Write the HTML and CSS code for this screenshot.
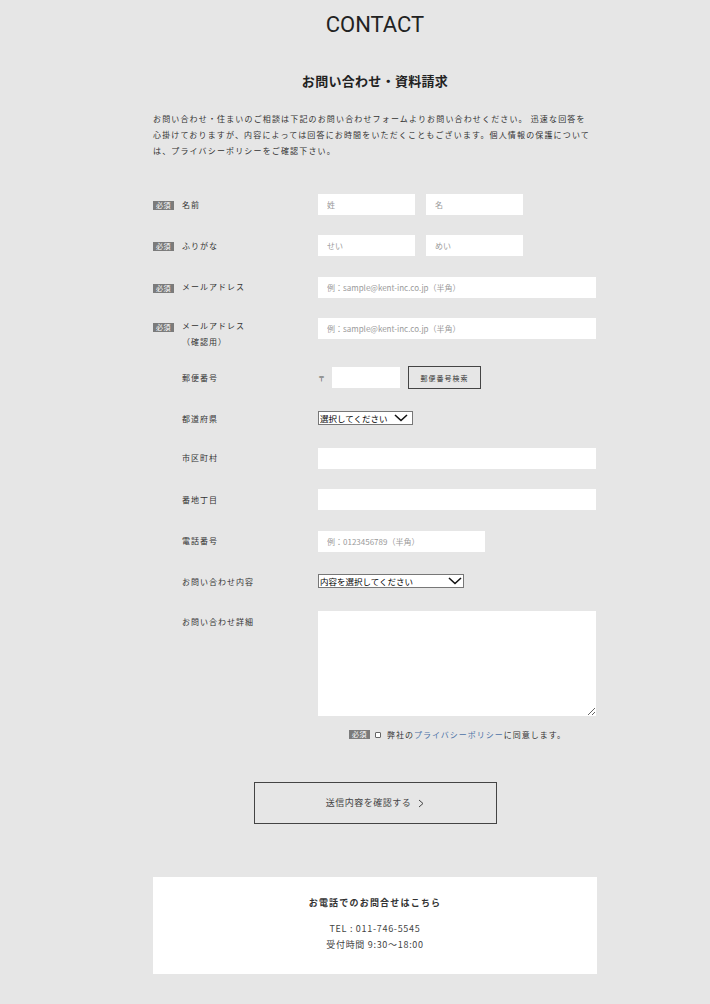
FILE: index.html
```html
<!DOCTYPE html>
<html lang="ja">
<head>
    <meta charset="UTF-8">
    <meta name="viewport" content="width=device-width, initial-scale=1.0">
    <title>CONTACT</title>
    <link rel="stylesheet" href="styles.css">
</head>
<body>
    <div class="wrap">
        <h1 class="page-title">CONTACT</h1>
        <h2 class="section-title">お問い合わせ・資料請求</h2>
        <p class="lead">お問い合わせ・住まいのご相談は下記のお問い合わせフォームよりお問い合わせください。 迅速な回答を<br>心掛けておりますが、内容によっては回答にお時間をいただくこともございます。個人情報の保護について<br>は、プライバシーポリシーをご確認下さい。</p>

        <form class="contact-form" onsubmit="return false;">
            <div class="row">
                <div class="label"><span class="req">必須</span><span>名前</span></div>
                <div class="field">
                    <input class="input half" type="text" placeholder="姓">
                    <input class="input half" type="text" placeholder="名">
                </div>
            </div>

            <div class="row">
                <div class="label"><span class="req">必須</span><span>ふりがな</span></div>
                <div class="field">
                    <input class="input half" type="text" placeholder="せい">
                    <input class="input half" type="text" placeholder="めい">
                </div>
            </div>

            <div class="row">
                <div class="label"><span class="req">必須</span><span>メールアドレス</span></div>
                <div class="field">
                    <input class="input full" type="email" placeholder="例：sample@kent-inc.co.jp（半角）">
                </div>
            </div>

            <div class="row row-2line">
                <div class="label"><span class="req">必須</span><span>メールアドレス<br>（確認用）</span></div>
                <div class="field">
                    <input class="input full" type="email" placeholder="例：sample@kent-inc.co.jp（半角）">
                </div>
            </div>

            <div class="row">
                <div class="label plain">郵便番号</div>
                <div class="field">
                    <span class="zip-mark">〒</span>
                    <input class="input zip" type="text">
                    <button class="zip-btn" type="button">郵便番号検索</button>
                </div>
            </div>

            <div class="row row-select">
                <div class="label plain">都道府県</div>
                <div class="field">
                    <span class="select-wrap">
                        <select class="select pref">
                            <option>選択してください</option>
                        </select>
                        <svg class="chevron" width="14" height="8" viewBox="0 0 14 8"><path d="M1 1 L7 6.5 L13 1" fill="none" stroke="#111" stroke-width="1.6"/></svg>
                    </span>
                </div>
            </div>

            <div class="row">
                <div class="label plain">市区町村</div>
                <div class="field"><input class="input full" type="text"></div>
            </div>

            <div class="row">
                <div class="label plain">番地丁目</div>
                <div class="field"><input class="input full" type="text"></div>
            </div>

            <div class="row">
                <div class="label plain">電話番号</div>
                <div class="field"><input class="input tel" type="tel" placeholder="例：0123456789（半角）"></div>
            </div>

            <div class="row row-select">
                <div class="label plain">お問い合わせ内容</div>
                <div class="field">
                    <span class="select-wrap">
                        <select class="select kind">
                            <option>内容を選択してください</option>
                        </select>
                        <svg class="chevron chevron-tight" width="14" height="8" viewBox="0 0 14 8"><path d="M1 1 L7 6.5 L13 1" fill="none" stroke="#111" stroke-width="1.6"/></svg>
                    </span>
                </div>
            </div>

            <div class="row row-last">
                <div class="label plain">お問い合わせ詳細</div>
                <div class="field"><textarea class="textarea"></textarea></div>
            </div>

            <div class="agree">
                <span class="req">必須</span>
                <input class="check" type="checkbox" id="agree">
                <label for="agree">弊社の<a href="#">プライバシーポリシー</a>に同意します。</label>
            </div>

            <div class="submit-area">
                <button class="submit-btn" type="submit">送信内容を確認する<svg class="arrow" width="6" height="9" viewBox="0 0 6 9"><path d="M1 1 L5 4.5 L1 8" fill="none" stroke="#444" stroke-width="1"/></svg></button>
            </div>
        </form>

        <div class="tel-box">
            <h3 class="tel-title">お電話でのお問合せはこちら</h3>
            <p class="tel-line">TEL : 011-746-5545</p>
            <p class="tel-line">受付時間 9:30〜18:00</p>
        </div>
    </div>
</body>
</html>
```

FILE: styles.css
```css
body {
    margin: 0;
    background-color: #e6e6e6;
    color: #333;
    font-family: "Noto Sans CJK JP", "Noto Sans", sans-serif;
}

.wrap {
    width: 444px;
    margin-left: 153px;
    padding-bottom: 29px;
}

.page-title {
    margin: 12px 0 0;
    font-family: Roboto, "Noto Sans", sans-serif;
    font-weight: 400;
    font-size: 22px;
    line-height: 26px;
    text-align: center;
    color: #222;
}

.section-title {
    margin: 33px 0 0;
    font-size: 13px;
    line-height: 20px;
    font-weight: bold;
    letter-spacing: 0.3px;
    text-align: center;
    color: #222;
}

.lead {
    margin: 20px 0 0;
    font-size: 8px;
    line-height: 16px;
    letter-spacing: 1.15px;
}

/* form */
.contact-form {
    margin-top: 35px;
}

.row {
    display: flex;
    align-items: flex-start;
    margin-bottom: 20.33px;
}

.row-2line {
    margin-bottom: 16.8px;
}

.row-last {
    margin-bottom: 0;
}

.label {
    width: 165px;
    flex-shrink: 0;
    display: flex;
    align-items: flex-start;
    padding-top: 2.5px;
    font-size: 8px;
    line-height: 16px;
    letter-spacing: 1px;
}

.row-2line .label {
    padding-top: 0.5px;
}

.label.plain {
    padding-left: 29px;
    box-sizing: border-box;
}

.req {
    display: inline-block;
    width: 21px;
    height: 9px;
    margin: 4.5px 8px 0 0;
    background: #7b7b7b;
    color: #fff;
    font-size: 7px;
    line-height: 9px;
    letter-spacing: 0.5px;
    text-align: center;
    flex-shrink: 0;
}

.field {
    flex: 1;
    display: flex;
    align-items: center;
    gap: 11px;
    min-height: 21px;
}

.row-select .field {
    min-height: 19px;
}

.input {
    height: 21px;
    box-sizing: border-box;
    border: none;
    background: #fff;
    padding: 0 9px;
    font-family: "Noto Sans CJK JP", "Noto Sans", sans-serif;
    font-size: 8px;
    color: #333;
    outline: none;
}

.input::placeholder {
    color: #9a9a9a;
}

.input.half { width: 97px; }
.input.full { width: 278px; }
.input.tel { width: 167px; }
.input.zip { width: 68px; margin-left: -4px; }

.zip-mark {
    font-size: 7px;
    color: #555;
}

.zip-btn {
    width: 73px;
    height: 23px;
    margin: -1px 0 -1px -3px;
    border: 1px solid #444;
    background: transparent;
    font-family: "Noto Sans CJK JP", "Noto Sans", sans-serif;
    font-size: 7px;
    letter-spacing: 1px;
    color: #333;
    padding: 0;
    cursor: pointer;
}

.select-wrap {
    position: relative;
    display: inline-block;
    height: 14px;
}

.select {
    appearance: none;
    -webkit-appearance: none;
    height: 14px;
    box-sizing: border-box;
    border: 1px solid #777;
    border-radius: 0;
    background: #fff;
    padding: 0 0 0 1px;
    font-family: "Noto Sans CJK JP", "Noto Sans", sans-serif;
    font-size: 8.5px;
    line-height: 12px;
    color: #000;
    outline: none;
    display: block;
}

.select.pref { width: 95px; }
.select.kind { width: 146px; }

.chevron {
    position: absolute;
    right: 5px;
    top: 3px;
    pointer-events: none;
}

.chevron-tight {
    right: 2px;
}

.textarea {
    width: 278px;
    height: 105px;
    box-sizing: border-box;
    border: none;
    background: #fff;
    resize: both;
    outline: none;
    font-family: "Noto Sans CJK JP", "Noto Sans", sans-serif;
    font-size: 8px;
}

.agree {
    display: flex;
    align-items: center;
    justify-content: center;
    padding-left: 165px;
    margin-top: 10.5px;
    font-size: 8px;
    line-height: 16px;
    letter-spacing: 1px;
}

.agree .req {
    margin: 0 3px 0 0;
}

.check {
    appearance: none;
    -webkit-appearance: none;
    width: 6px;
    height: 6px;
    margin: 0 6px 0 2px;
    border: 1px solid #666;
    border-radius: 1px;
    background: #fff;
}

.agree a {
    color: #4d72a6;
    text-decoration: none;
}

.submit-area {
    margin-top: 39px;
    text-align: center;
}

.submit-btn {
    width: 243px;
    height: 42px;
    border: 1px solid #444;
    background: transparent;
    font-family: "Noto Sans CJK JP", "Noto Sans", sans-serif;
    font-size: 9px;
    letter-spacing: 0.5px;
    color: #444;
    cursor: pointer;
    display: inline-flex;
    align-items: center;
    justify-content: center;
}

.arrow {
    margin-left: 7px;
    margin-top: 2px;
}

/* phone box */
.tel-box {
    margin-top: 53px;
    background: #fff;
    padding: 18px 0 21px;
    text-align: center;
}

.tel-title {
    margin: 0 0 10px;
    font-size: 9px;
    line-height: 16px;
    font-weight: bold;
    letter-spacing: 1.2px;
    color: #333;
}

.tel-line {
    margin: 0;
    font-size: 9px;
    line-height: 16px;
    letter-spacing: 0.7px;
    color: #444;
}
```
